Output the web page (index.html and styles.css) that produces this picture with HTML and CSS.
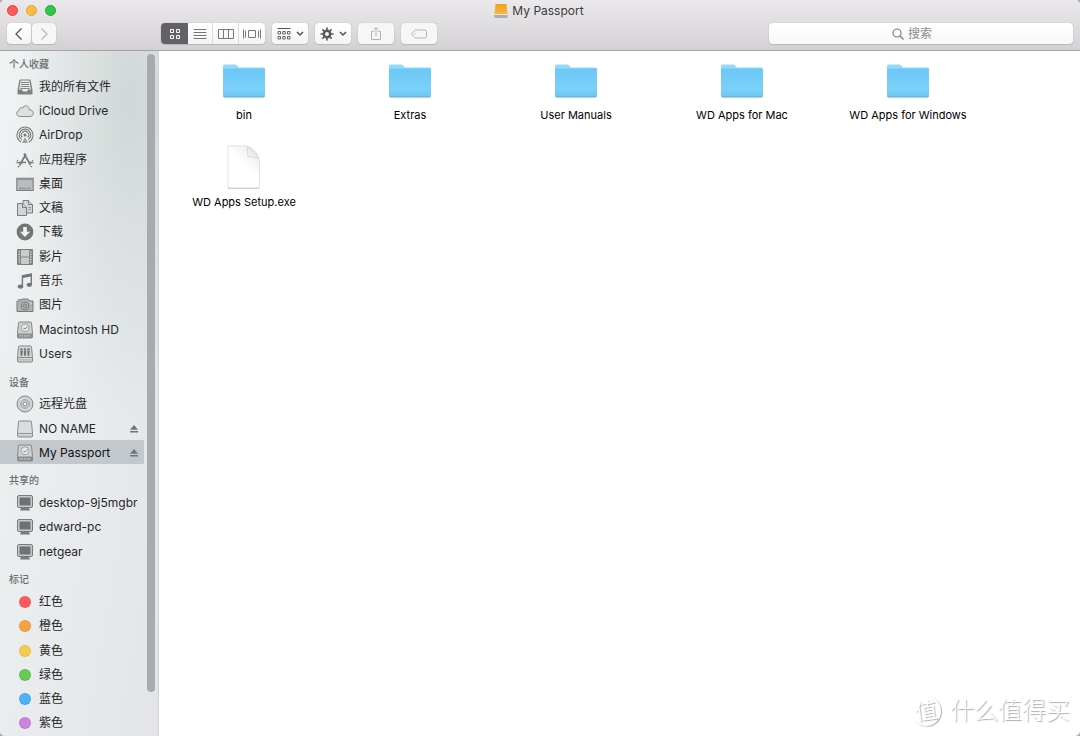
FILE: index.html
```html
<!DOCTYPE html>
<html lang="zh-CN">
<head>
<meta charset="utf-8">
<meta name="viewport" content="width=device-width, initial-scale=1">
<title>My Passport</title>
<link rel="stylesheet" href="styles.css">
</head>
<body>
<svg class="defs" aria-hidden="true">
  <defs>
    <linearGradient id="blue" x1="0" y1="0" x2="0" y2="1"><stop offset="0" stop-color="#6bc8f6"/><stop offset=".7" stop-color="#7bd1fa"/><stop offset="1" stop-color="#70c5ef"/></linearGradient>
    <linearGradient id="curl" x1="0" y1="1" x2="1" y2="0"><stop offset="0" stop-color="#fff"/><stop offset=".5" stop-color="#e8e8e8"/><stop offset="1" stop-color="#fff"/></linearGradient>
    <linearGradient id="paper" x1=".45" y1=".4" x2=".75" y2="0"><stop offset="0" stop-color="#fff"/><stop offset="1" stop-color="#ececec"/></linearGradient>
    <linearGradient id="orange" x1="0" y1="0" x2="0" y2="1"><stop offset="0" stop-color="#f0a01f"/><stop offset="1" stop-color="#fdb942"/></linearGradient>
  </defs>
  <symbol id="folder" viewBox="0 0 42 34">
    <path d="M0 3V2Q0 .5 1.500.5H12Q13.500.5 14.500 2L16 3.500H40.500Q42 3.500 42 5V12H0Z" fill="#94d9f8"/>
    <path d="M0 5.500Q0 4.500 1 4.500H41Q42 4.500 42 5.500V31.500Q42 33 40.500 33H1.500Q0 33 0 31.500Z" fill="url(#blue)"/>
    <path d="M.5 32.500Q1 33 1.500 33H40.500Q41 33 41.500 32.500" fill="none" stroke="#62a9cb"/>
  </symbol>
  <symbol id="file" viewBox="0 0 34 44">
    <path d="M1 .8H17.500C24 .8 32.500 9 32.500 17V43H1Z" fill="url(#paper)" stroke="#dcdcdc" stroke-width=".8"/>
    <path d="M20 1.500L21 11.500L31.800 13C29.500 8 25 3.500 20 1.500Z" fill="url(#curl)" stroke="#cfcfcf" stroke-width=".7"/>
    <path d="M1 43.300H32.500" stroke="#cacaca"/>
  </symbol>
  <symbol id="all" viewBox="0 0 18 18">
    <path d="M4.500 1.500h9q1 0 1.200 1L16.500 12v3.500q0 1-1 1h-13q-1 0-1-1V12L3.300 2.500q.2-1 1.200-1z" fill="#808282"/>
    <path d="M4.700 2.500h8.600l1.700 9h-3l-1 2H7l-1-2H3z" fill="#eceeee"/>
    <path d="M5 4.500h8M4.800 6.500h8.400M4.500 8.500h9M4.300 10.500h9.400" stroke="#858787"/>
  </symbol>
  <symbol id="cloud" viewBox="0 0 18 18">
    <path d="M4.500 14.500C2.300 14.500.7 13.300.7 11.400S2 8.500 3.200 8.500C2.800 6 5.200 5 6.600 6C7.800 2.800 13.300 3 13.500 8C15.900 7.700 17.300 9.500 17.300 11.200C17.300 13.400 15.800 14.500 14 14.500Z" fill="#dfe1e1" stroke="#8b8d8d"/>
  </symbol>
  <symbol id="airdrop" viewBox="0 0 18 18">
    <g fill="none" stroke="#7b7d7d" stroke-width="1.100"><path d="M5.200 16.100A8 8 0 1 1 12.800 16.100"/><path d="M5.700 13.700A5.800 5.800 0 1 1 12.300 13.700"/><path d="M6.300 11.500A3.700 3.700 0 1 1 11.700 11.500"/></g>
    <circle cx="9" cy="9" r="1.500" fill="#777979"/><path d="M9 11L6 17h6z" fill="#a0a2a2"/>
  </symbol>
  <symbol id="apps" viewBox="0 0 18 18">
    <g fill="none" stroke="#777979"><path d="M10 3L3.500 14.500M8 2.500L14.500 14" stroke-width="1.700"/><path d="M.5 11.500H10M13 11.500h4.500" stroke-width="1.500"/><path d="M3 15l-.8 1.300M15 15l.6 1.300" stroke-width="1.400"/></g>
    <circle cx="1.500" cy="9.500" r=".7" fill="#777"/><circle cx="16.500" cy="9.500" r=".7" fill="#777"/>
  </symbol>
  <symbol id="desktop" viewBox="0 0 18 18">
    <path d="M.8 3.200h16.400v12.300H.8z" fill="#b9bcbd" stroke="#7b7d7e" stroke-width="1.100"/><path d="M1 4.500h16" stroke="#959797"/><path d="M3.500 13.500h11" stroke="#7b7d7e" stroke-width="1.500" stroke-dasharray="1.500 1"/>
  </symbol>
  <symbol id="docs" viewBox="0 0 18 18">
    <g fill="#d2d5d6" stroke="#7b7d7e"><path d="M7 1.500h5.500L16.500 5.500V14H7z"/><path d="M12.500 1.500v4h4"/><path d="M1.500 4.500h5l4 4v8h-9z"/><path d="M6.500 4.500v4h4"/></g><path d="M12.500 8.500h2.500M12.500 10.500h2.500" stroke="#999"/>
  </symbol>
  <symbol id="down" viewBox="0 0 18 18">
    <circle cx="9" cy="9" r="8.400" fill="#747677"/><path d="M7.200 4h3.600v4.800h3.200L9 14 4 8.800h3.200z" fill="#f3f5f5"/>
  </symbol>
  <symbol id="film" viewBox="0 0 18 18">
    <path d="M1.500 1.500h15v15h-15z" fill="#c9cccd" stroke="#7b7d7e"/><path d="M2.800 2v14M15.200 2v14" stroke="#777" stroke-width="1.500" stroke-dasharray="1.500 1"/><path d="M4.500 2v14M13.500 2v14M4.500 9h9" stroke="#858787"/>
  </symbol>
  <symbol id="music" viewBox="0 0 18 18">
    <path d="M6.400 14V3.800L15.300 2V12.300" fill="none" stroke="#747677" stroke-width="1.400"/><path d="M6 3.500L16 1.400v2.800L6 6.200z" fill="#747677"/><ellipse cx="4.500" cy="14.600" rx="2.800" ry="2.100" fill="#747677"/><ellipse cx="13.400" cy="12.800" rx="2.700" ry="2.100" fill="#747677"/>
  </symbol>
  <symbol id="camera" viewBox="0 0 18 18">
    <path d="M1 5h3.500L6 3h6l1.500 2H17v10.500H1z" fill="#b0b3b4" stroke="#777979"/><path d="M2.500 3.500h2" stroke="#777"/><circle cx="9" cy="10" r="4" fill="#cacccd" stroke="#777"/><circle cx="9" cy="10" r="2.200" fill="#a5a5a5" stroke="#777"/><circle cx="15" cy="7" r=".7" fill="#eee"/>
  </symbol>
  <symbol id="hd" viewBox="0 0 18 18">
    <path d="M3.500 1h11q.8 0 1 1l1 10.500v3.500q0 1-1 1h-13q-1 0-1-1v-3.500l1-10.500q.2-1 1-1z" fill="#cfd1d2" stroke="#848687"/><path d="M1.500 12.500h15V16q0 1-1 1h-13q-1 0-1-1z" fill="#8b8d8e"/><circle cx="9" cy="6.800" r="4" fill="#e4e6e6" stroke="#a2a4a5"/><path d="M7.500 7.500h2l2-2" fill="none" stroke="#858787"/><path d="M3.500 14.800h11" stroke="#d8d8d8" stroke-width="1.300" stroke-dasharray="1.300 1"/>
  </symbol>
  <symbol id="users" viewBox="0 0 18 18">
    <path d="M3.500 1h11q.8 0 1 1l1 10.500v3.500q0 1-1 1h-13q-1 0-1-1v-3.500l1-10.500q.2-1 1-1z" fill="#d5d7d8" stroke="#848687"/><path d="M2 12.500h14" stroke="#848687"/><path d="M2.500 14.800h13" stroke="#bbb" stroke-width="1.500"/><g fill="#707273"><circle cx="5.500" cy="4.500" r="1.200"/><circle cx="9" cy="4.500" r="1.200"/><circle cx="12.500" cy="4.500" r="1.200"/><path d="M4.200 6h2.600l-.6 5H4.800zM7.700 6h2.600l-.6 5H8.300zM11.200 6h2.600l-.6 5h-1.400z"/></g>
  </symbol>
  <symbol id="disc" viewBox="0 0 18 18">
    <circle cx="9" cy="9" r="8" fill="#d0d2d4" stroke="#858789"/><circle cx="9" cy="9" r="4.200" fill="none" stroke="#97989a"/><circle cx="9" cy="9" r="2" fill="#f0f0f2" stroke="#8a8c8e"/><path d="M4 4l2 2M12 12l2 2" stroke="#eee"/>
  </symbol>
  <symbol id="drive" viewBox="0 0 18 18">
    <path d="M3.500 1h11q1 0 1 1l1 11.500V16q0 1-1 1h-13q-1 0-1-1v-2.500L2.500 2q0-1 1-1z" fill="#dadcde" stroke="#88898b"/><path d="M1.500 13.500h15" stroke="#919395"/><path d="M2.500 15.500h13" stroke="#c2c2c2"/>
  </symbol>
  <symbol id="pc" viewBox="0 0 18 18">
    <rect x="1.500" y="1.500" width="15" height="12" rx="1.500" fill="#c8c9cb" stroke="#77797b"/><rect x="3.500" y="3.500" width="11" height="8" fill="#6f7173"/><path d="M5 14h8l1 2.500H4z" fill="#77797b"/>
  </symbol>
  <symbol id="eject" viewBox="0 0 10 10">
    <path d="M5 1l4 4.800H1zM1 7h8v1.500H1z" fill="#717478"/>
  </symbol>
  <symbol id="chevron" viewBox="0 0 8 6">
    <path d="M1 1l3 3 3-3" fill="none" stroke="#555" stroke-width="1.500"/>
  </symbol>
</svg>

<div class="window">
  <header class="titlebar">
    <div class="lights">
      <button class="light close" aria-label="关闭"></button>
      <button class="light minimize" aria-label="最小化"></button>
      <button class="light zoom" aria-label="缩放"></button>
    </div>
    <h1 class="title">
      <svg class="title-icon" viewBox="0 0 14 16" aria-hidden="true"><path d="M2.200 1h9.600q.7 0 .8.800L13.600 12H.4L1.400 1.800Q1.500 1 2.200 1z" fill="url(#orange)"/><path d="M.4 11h13.200v3q0 1-1 1H1.400q-1 0-1-1z" fill="#a4adb8"/><path d="M.5 11.500h13" stroke="#e8e8e8"/></svg>
      My Passport
    </h1>
    <div class="toolbar">
      <div class="nav-buttons">
        <button class="tool nav" aria-label="后退"><svg width="10" height="14" viewBox="0 0 10 14"><path d="M7.500 1.500L2 7l5.500 5.500" fill="none" stroke="#555" stroke-width="1.300"/></svg></button>
        <button class="tool nav" aria-label="前进" disabled><svg width="10" height="14" viewBox="0 0 10 14"><path d="M2.500 1.500L8 7l-5.500 5.500" fill="none" stroke="#bbb" stroke-width="1.300"/></svg></button>
      </div>
      <div class="segments">
        <button class="segment active" aria-label="图标"><svg width="12" height="12" viewBox="0 0 12 12"><path d="M1.500 1.500h3v3h-3zM7.500 1.500h3v3h-3zM1.500 7.500h3v3h-3zM7.500 7.500h3v3h-3z" fill="none" stroke="#fff"/></svg></button>
        <button class="segment" aria-label="列表"><svg width="14" height="12" viewBox="0 0 14 12"><path d="M.5 1.500h13M.5 4.500h13M.5 7.500h13M.5 10.500h13" stroke="#777"/></svg></button>
        <button class="segment" aria-label="分栏"><svg width="16" height="12" viewBox="0 0 16 12"><path d="M.5 1.500h15v9H.5zM5.500 1.500v9M10.500 1.500v9" fill="none" stroke="#777"/></svg></button>
        <button class="segment" aria-label="Cover Flow"><svg width="18" height="12" viewBox="0 0 18 12"><path d="M.5 1.500v9M2.500 2.500v7M5.500 2.500h7v7h-7zM15.500 2.500v7M17.500 1.500v9" fill="none" stroke="#777"/></svg></button>
      </div>
      <button class="tool" aria-label="排列"><svg width="14" height="14" viewBox="0 0 14 14"><path d="M.5 1.500h13" stroke="#555"/><path d="M1 4.500h2.500V7H1zM5.700 4.500h2.500V7H5.700zM10.500 4.500H13V7h-2.500zM1 9.500h2.500V12H1zM5.700 9.500h2.500V12H5.700zM10.500 9.500H13V12h-2.500z" fill="none" stroke="#666"/></svg><svg width="8" height="6"><use href="#chevron"/></svg></button>
      <button class="tool" aria-label="操作"><svg width="14" height="14" viewBox="0 0 14 14"><circle cx="7" cy="7" r="3.200" fill="none" stroke="#5c5c5c" stroke-width="2.500"/><path d="M7 .5v3M7 10.500v3M.5 7h3M10.500 7h3M2.400 2.400l2.100 2.100M9.500 9.500l2.100 2.100M2.400 11.600l2.100-2.100M9.500 4.500l2.100-2.100" stroke="#5c5c5c" stroke-width="1.700"/></svg><svg width="8" height="6"><use href="#chevron"/></svg></button>
      <button class="tool" aria-label="共享" disabled><svg width="12" height="15" viewBox="0 0 12 15"><path d="M4 5.500H1.500v8h9v-8H8M6 10V1.500M3.500 4L6 1.500 8.500 4" fill="none" stroke="#b4b4b4"/></svg></button>
      <button class="tool" aria-label="标记" disabled><svg width="16" height="10" viewBox="0 0 16 10"><path d="M4.500 1h9.500q1.500 0 1.500 1.500v5Q15.500 9 14 9H4.500L1.500 6.500Q.3 5 1.500 3.500z" fill="none" stroke="#b4b4b4"/><circle cx="4" cy="5" r=".7" fill="#b4b4b4"/></svg></button>
      <label class="search">
        <svg class="search-icon" viewBox="0 0 12 12" aria-hidden="true"><circle cx="5" cy="5" r="4" fill="none" stroke="#777" stroke-width="1.100"/><path d="M8 8l3.500 3.500" stroke="#777" stroke-width="1.300"/></svg>
        <input class="search-input" type="search" placeholder="搜索" aria-label="搜索">
      </label>
    </div>
  </header>

  <div class="content">
    <nav class="sidebar">
      <section class="group">
        <h2 class="heading">个人收藏</h2>
        <a class="row" href="#"><svg class="icon"><use href="#all"/></svg>我的所有文件</a>
        <a class="row" href="#"><svg class="icon"><use href="#cloud"/></svg>iCloud Drive</a>
        <a class="row" href="#"><svg class="icon"><use href="#airdrop"/></svg>AirDrop</a>
        <a class="row" href="#"><svg class="icon"><use href="#apps"/></svg>应用程序</a>
        <a class="row" href="#"><svg class="icon"><use href="#desktop"/></svg>桌面</a>
        <a class="row" href="#"><svg class="icon"><use href="#docs"/></svg>文稿</a>
        <a class="row" href="#"><svg class="icon"><use href="#down"/></svg>下载</a>
        <a class="row" href="#"><svg class="icon"><use href="#film"/></svg>影片</a>
        <a class="row" href="#"><svg class="icon"><use href="#music"/></svg>音乐</a>
        <a class="row" href="#"><svg class="icon"><use href="#camera"/></svg>图片</a>
        <a class="row" href="#"><svg class="icon"><use href="#hd"/></svg>Macintosh HD</a>
        <a class="row" href="#"><svg class="icon"><use href="#users"/></svg>Users</a>
      </section>
      <section class="group">
        <h2 class="heading">设备</h2>
        <a class="row" href="#"><svg class="icon"><use href="#disc"/></svg>远程光盘</a>
        <div class="row"><a class="device" href="#"><svg class="icon"><use href="#drive"/></svg>NO NAME</a><button class="eject" aria-label="推出 NO NAME"><svg width="10" height="10"><use href="#eject"/></svg></button></div>
        <div class="row selected"><a class="device" href="#"><svg class="icon"><use href="#hd"/></svg>My Passport</a><button class="eject" aria-label="推出 My Passport"><svg width="10" height="10"><use href="#eject"/></svg></button></div>
      </section>
      <section class="group">
        <h2 class="heading">共享的</h2>
        <a class="row" href="#"><svg class="icon"><use href="#pc"/></svg>desktop-9j5mgbr</a>
        <a class="row" href="#"><svg class="icon"><use href="#pc"/></svg>edward-pc</a>
        <a class="row" href="#"><svg class="icon"><use href="#pc"/></svg>netgear</a>
      </section>
      <section class="group">
        <h2 class="heading">标记</h2>
        <a class="row" href="#"><span class="dot red"></span>红色</a>
        <a class="row" href="#"><span class="dot orange"></span>橙色</a>
        <a class="row" href="#"><span class="dot yellow"></span>黄色</a>
        <a class="row" href="#"><span class="dot green"></span>绿色</a>
        <a class="row" href="#"><span class="dot blue"></span>蓝色</a>
        <a class="row" href="#"><span class="dot purple"></span>紫色</a>
      </section>
      <div class="scroll-thumb"></div>
    </nav>

    <main class="files">
      <a class="file" href="#"><svg class="folder-icon"><use href="#folder"/></svg>bin</a>
      <a class="file" href="#"><svg class="folder-icon"><use href="#folder"/></svg>Extras</a>
      <a class="file" href="#"><svg class="folder-icon"><use href="#folder"/></svg>User Manuals</a>
      <a class="file" href="#"><svg class="folder-icon"><use href="#folder"/></svg>WD Apps for Mac</a>
      <a class="file" href="#"><svg class="folder-icon"><use href="#folder"/></svg>WD Apps for Windows</a>
      <a class="file" href="#"><svg class="file-icon"><use href="#file"/></svg>WD Apps Setup.exe</a>
    </main>
  </div>
  <div class="watermark"><span class="badge">值</span>什么值得买</div>
</div>
</body>
</html>
```
FILE: styles.css
```css
* {
  box-sizing: border-box;
}

body {
  margin: 0;
  background: #a9a9ac;
  color: #262829;
  font-family: Inter, "Noto Sans CJK SC", sans-serif;
  font-size: 12px;
  line-height: 16px;
}

button {
  padding: 0;
  border: 0;
  background: none;
  font: inherit;
}

a {
  color: inherit;
  text-decoration: none;
}

.defs {
  position: absolute;
  width: 0;
  height: 0;
}

.window {
  position: relative;
  display: flex;
  flex-direction: column;
  min-height: 100vh;
  overflow: hidden;
  border-radius: 5px;
  background: #fff;
}

.titlebar {
  position: relative;
  display: flex;
  flex-direction: column;
  gap: 7px;
  padding: 5px 7px 6px;
  border-bottom: 1px solid #a5a3a6;
  background: linear-gradient(#ebe9eb, #d3d1d4);
}

.lights {
  display: flex;
  gap: 8px;
  height: 11px;
}

.light {
  width: 11px;
  height: 11px;
  border: 1px solid #e0443e;
  border-radius: 50%;
  background: #fc5b57;
}

.minimize {
  border-color: #e0a035;
  background: #fdbc40;
}

.zoom {
  border-color: #25a838;
  background: #33c748;
}

.title {
  position: absolute;
  top: 3px;
  right: 0;
  left: 0;
  display: flex;
  align-items: center;
  justify-content: center;
  gap: 4px;
  margin: 0;
  padding-right: 2px;
  color: #3d3b3d;
  font-size: 12px;
  font-weight: 400;
  pointer-events: none;
}

.title-icon {
  width: 14px;
  height: 16px;
}

.toolbar {
  display: flex;
  gap: 7px;
}

.nav-buttons {
  display: flex;
  gap: 1px;
  margin-right: 98px;
}

.tool,
.segments {
  display: flex;
  align-items: center;
  justify-content: center;
  height: 21px;
  border-radius: 4px;
  background: linear-gradient(#fff, #f4f4f4);
  box-shadow: 0 0 1px #9d9b9e, 0 1px 1px #bdbbbe;
}

.tool {
  gap: 5px;
  width: 36px;
}

.tool:disabled {
  background: #f7f6f7;
}

.tool.nav {
  width: 24px;
}

.segments {
  overflow: hidden;
}

.segment {
  display: flex;
  align-items: center;
  justify-content: center;
  width: 26px;
  height: 21px;
  border-right: 1px solid #dcdadc;
}

.segment:last-child {
  border-right: 0;
}

.segment.active {
  width: 27px;
  border-right: 0;
  background: #636165;
}

.segment:nth-child(2) {
  width: 25px;
}

.search {
  position: relative;
  flex: 0 1 304px;
  margin-left: auto;
}

.search-icon {
  position: absolute;
  top: 5px;
  left: calc(50% - 29px);
  width: 12px;
  height: 12px;
}

.search-input {
  width: 100%;
  height: 21px;
  padding: 0 8px 0 18px;
  border: 0;
  border-radius: 4px;
  outline: 0;
  background: linear-gradient(#fff, #f8f8f8);
  box-shadow: 0 0 1px #9d9b9e, 0 1px 1px #bdbbbe;
  color: #333;
  font: inherit;
  text-align: center;
}

.search-input::placeholder {
  color: #8b8b8b;
}

.content {
  display: flex;
  flex: 1;
}

.sidebar {
  position: relative;
  display: flex;
  flex-direction: column;
  width: 159px;
  padding-bottom: 1px;
  border-right: 1px solid #d0d2d4;
  background: radial-gradient(ellipse 110px 320px at 130px 50px, #d1d7d6, transparent), linear-gradient(100deg, #eff3f3, #e3e4e8);
}

.group {
  display: contents;
}

.heading {
  height: 26px;
  margin: 0;
  padding: 8px 9px 0;
  color: #6a6d6e;
  font-size: 10px;
  font-weight: 500;
}

.group:first-child .heading {
  height: 23px;
  padding-top: 5px;
}

.row {
  display: flex;
  flex: 1 0 24px;
  align-items: center;
  width: 144px;
  padding-top: 1px;
  padding-left: 16px;
  white-space: nowrap;
}

.device {
  display: flex;
  flex: 1;
  align-items: center;
}

.selected {
  background: #c3c8cc;
  color: #111;
}

.icon {
  width: 18px;
  height: 18px;
  margin-right: 5px;
}

.eject {
  display: flex;
  margin-right: 5px;
}

.dot {
  width: 12px;
  height: 12px;
  margin: 0 8px 0 3px;
  border: 1px solid #0000000d;
  border-radius: 50%;
}

.red {
  background: #fb5c5b;
}

.orange {
  background: #f7a145;
}

.yellow {
  background: #f4cb50;
}

.green {
  background: #68c954;
}

.blue {
  background: #49b3f3;
}

.purple {
  background: #cd83df;
}

.scroll-thumb {
  position: absolute;
  top: 3px;
  right: 3px;
  bottom: 44px;
  width: 8px;
  border-radius: 4px;
  background: #a8abad;
}

.files {
  display: grid;
  flex: 1;
  grid-template-columns: repeat(auto-fill, 166px);
  grid-auto-rows: 87px;
  align-content: start;
  padding-left: 2px;
}

.file {
  display: flex;
  flex-direction: column;
  align-items: center;
  justify-content: flex-end;
  padding-bottom: 15px;
  color: #000;
  font-size: 11px;
}

.folder-icon {
  width: 42px;
  height: 34px;
  margin-bottom: 9px;
}

.file-icon {
  width: 34px;
  height: 44px;
  margin-bottom: 5px;
}

.watermark {
  position: absolute;
  right: 10px;
  bottom: 10px;
  display: flex;
  align-items: center;
  gap: 9px;
  color: #fff;
  font-size: 24px;
  font-weight: 300;
  line-height: 30px;
  text-shadow: 1px 1px 1px #aaa;
}

.badge {
  width: 30px;
  height: 30px;
  border-radius: 50%;
  box-shadow: 1px 1px 1px #bbb;
  font-size: 22px;
  font-weight: 400;
  text-align: center;
  transform: rotate(-8deg);
}
```
